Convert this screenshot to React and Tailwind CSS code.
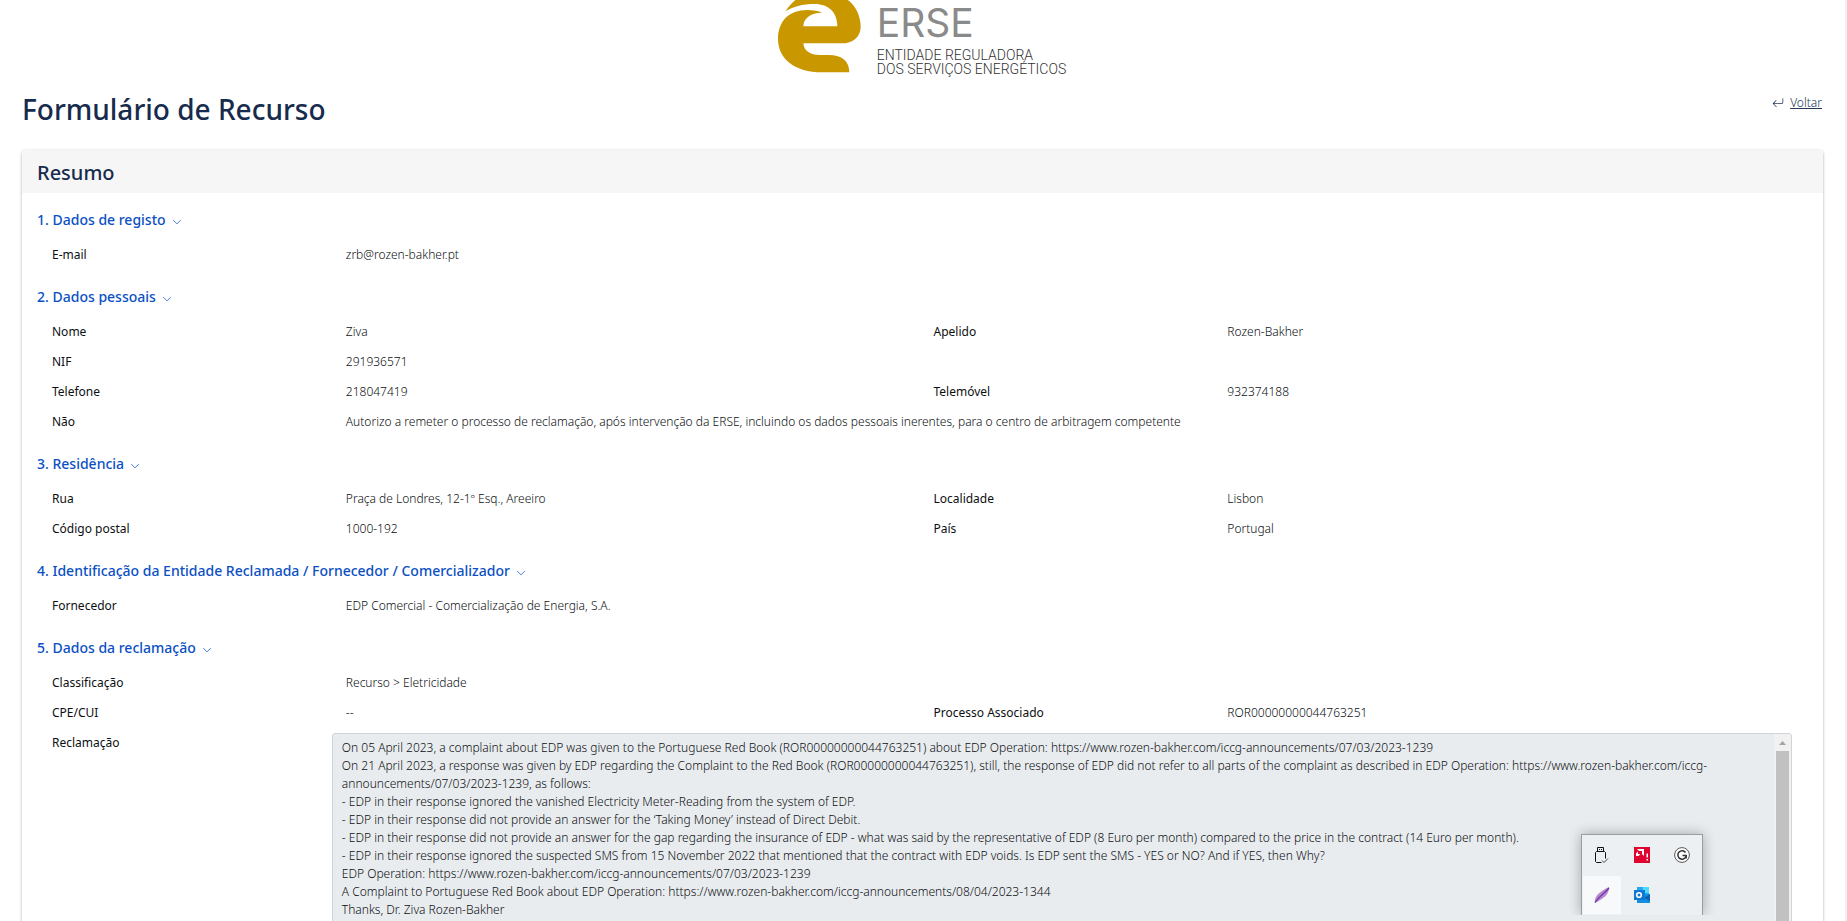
import { BsArrowReturnLeft, BsChevronDown } from "react-icons/bs";

const sections = [
  { title: "1. Dados de registo", rows: [["E-mail", "zrb@rozen-bakher.pt"]] },
  {
    title: "2. Dados pessoais",
    rows: [
      ["Nome", "Ziva", "Apelido", "Rozen-Bakher"],
      ["NIF", "291936571"],
      ["Telefone", "218047419", "Telemóvel", "932374188"],
      ["Não", "Autorizo a remeter o processo de reclamação, após intervenção da ERSE, incluindo os dados pessoais inerentes, para o centro de arbitragem competente"],
    ],
  },
  {
    title: "3. Residência",
    rows: [
      ["Rua", "Praça de Londres, 12-1º Esq., Areeiro", "Localidade", "Lisbon"],
      ["Código postal", "1000-192", "País", "Portugal"],
    ],
  },
  {
    title: "4. Identificação da Entidade Reclamada / Fornecedor / Comercializador",
    rows: [["Fornecedor", "EDP Comercial - Comercialização de Energia, S.A."]],
  },
  {
    title: "5. Dados da reclamação",
    rows: [
      ["Classificação", "Recurso > Eletricidade"],
      ["CPE/CUI", "--", "Processo Associado", "ROR00000000044763251"],
    ],
    complaint: true,
  },
];

const complaint = `On 05 April 2023, a complaint about EDP was given to the Portuguese Red Book (ROR00000000044763251) about EDP Operation: https://www.rozen-bakher.com/iccg-announcements/07/03/2023-1239
On 21 April 2023, a response was given by EDP regarding the Complaint to the Red Book (ROR00000000044763251), still, the response of EDP did not refer to all parts of the complaint as described in EDP Operation: https://www.rozen-bakher.com/iccg-announcements/07/03/2023-1239, as follows:
- EDP in their response ignored the vanished Electricity Meter-Reading from the system of EDP.
- EDP in their response did not provide an answer for the ‘Taking Money’ instead of Direct Debit.
- EDP in their response did not provide an answer for the gap regarding the insurance of EDP - what was said by the representative of EDP (8 Euro per month) compared to the price in the contract (14 Euro per month).
- EDP in their response ignored the suspected SMS from 15 November 2022 that mentioned that the contract with EDP voids. Is EDP sent the SMS - YES or NO? And if YES, then Why?
EDP Operation: https://www.rozen-bakher.com/iccg-announcements/07/03/2023-1239
A Complaint to Portuguese Red Book about EDP Operation: https://www.rozen-bakher.com/iccg-announcements/08/04/2023-1344
Thanks, Dr. Ziva Rozen-Bakher`;

function Logo() {
  return (
    <div className="flex h-[78px] justify-center gap-4 pr-0.5">
      <svg viewBox="50 0 252 222" className="h-[74px] w-[84px]" aria-hidden="true">
        <path
          fill="#c99700"
          d="M75 34C87 16 97 8 108-3L258-3C287 15 301 50 301 80C301 112 276 130 245 130L129 130C130 152 150 165 178 165L205 165C246 165 267 184 267 217L185 217C103 217 53 176 53 117C53 64 86 30 140 30C160 30 175 33 185 38C150 38 129 56 129 79L231 79C231 38 206 12 163 12C126 12 98 20 75 34Z"
        />
      </svg>
      <div className="flex flex-col">
        <div className="font-['Inter'] text-[39px] font-normal leading-[46px] text-[#8a8a8a]">ERSE</div>
        <div className="mt-0.5 font-['Roboto'] text-[14px] leading-[14px] text-[#333]">
          ENTIDADE REGULADORA
          <br />
          DOS SERVIÇOS ENERGÉTICOS
        </div>
      </div>
    </div>
  );
}

function Row({ cells }) {
  const [label, value, label2, value2] = cells;
  return (
    <div className="grid h-[30px] grid-cols-[1fr_2fr_1fr_2fr] items-center">
      <dt className="px-[15px] font-normal">{label}</dt>
      <dd className={label2 ? "px-[15px]" : "col-span-3 px-[15px]"}>{value}</dd>
      {label2 && <dt className="px-[15px] font-normal">{label2}</dt>}
      {label2 && <dd className="px-[15px]">{value2}</dd>}
    </div>
  );
}

function ComplaintBox() {
  return (
    <div className="grid grid-cols-[1fr_5fr]">
      <label htmlFor="complaint" className="px-[15px] pt-1.5 font-normal">
        Reclamação
      </label>
      <div className="mt-[5px] mr-2 ml-px flex overflow-hidden rounded-[3px] border border-[#ced4da] bg-[#e9ecef]">
        <textarea
          id="complaint"
          readOnly
          rows={14}
          defaultValue={complaint}
          className="min-w-0 flex-1 resize-none bg-transparent py-[5px] pr-2 pl-[9px] outline-none [scrollbar-width:none]"
        />
        <div className="flex w-[17px] flex-col items-center bg-[#f1f1f1]" aria-hidden="true">
          <svg viewBox="0 0 17 17" className="h-[17px] w-[17px]">
            <path d="M5 11L8.500 7L12 11Z" fill="#a3a3a3" />
          </svg>
          <div className="w-[13px] flex-1 bg-[#c1c1c1]" />
        </div>
      </div>
    </div>
  );
}

function Section({ section }) {
  return (
    <section>
      <h3 className="pt-[15px] pb-2">
        <button type="button" className="flex h-6 items-center gap-1.5 text-[14px] font-medium text-[#0b50c4]">
          {section.title}
          <BsChevronDown className="mt-1 size-2.5" />
        </button>
      </h3>
      <dl>
        {section.rows.map((cells) => (
          <Row key={cells[0]} cells={cells} />
        ))}
      </dl>
      {section.complaint && <ComplaintBox />}
    </section>
  );
}

function Tray() {
  return (
    <div className="absolute right-[130px] bottom-1.5 overflow-hidden pt-4 pr-3 pl-3">
      <div className="grid w-[122px] grid-cols-3 border border-b-0 border-[#9a9da1] bg-[#edf0f3] shadow-[0_0_12px_rgba(0,0,0,0.3)]">
        <button type="button" aria-label="USB" className="grid h-10 place-items-center">
          <svg viewBox="0 0 16 16" className="size-4" fill="none" stroke="#111">
            <path d="M3.500 4.500v-4h6v4M2.500 15.500l-1-1v-9l1-1h8l1 1v6M2.500 15.500h5M5.500 2v1M7.500 2v1" />
            <path d="M8 13.500l2 2 4-4" stroke="#444" />
          </svg>
        </button>
        <button type="button" aria-label="AMD" className="grid h-10 place-items-center">
          <svg viewBox="0 0 16 16" className="size-4">
            <path fill="#e0052f" d="M0 0h16v16H0z" />
            <path fill="#fff" d="M3 2h7v7L8 7V4H5zM4 4.500L2 6.500V9h2.500l2-2H4zM12.500 6.500h1.500v4h-1.500zM12.500 12h1.500v1.500h-1.500z" />
          </svg>
        </button>
        <button type="button" aria-label="G" className="grid h-10 place-items-center">
          <svg viewBox="0 0 16 16" className="size-4" fill="none">
            <circle cx="8" cy="8" r="7.400" fill="#fff" stroke="#555" strokeWidth="1" />
            <path d="M11.500 5.500A4.200 4.200 0 1 0 12 9.500M8.500 8.500H12.200V11.500" stroke="#333" strokeWidth="1.500" />
          </svg>
        </button>
        <button type="button" aria-label="Feather" className="m-px grid h-[38px] place-items-center bg-[#f7f9fb]">
          <svg viewBox="0 0 16 16" className="size-4">
            <path fill="#b58ad0" d="M1 16C0 9 5 5 15 0C15 8 10 11 1 16Z" />
            <path d="M1 15.500C5 9 10 7 15 1" stroke="#7a35a8" strokeWidth="1.400" fill="none" />
          </svg>
        </button>
        <button type="button" aria-label="Outlook" className="grid h-10 place-items-center">
          <svg viewBox="0 0 16 16" className="size-4">
            <path fill="#28a8ea" d="M3 0h12v8H3z" />
            <path fill="#50d9ff" d="M9 0h6v6h-6z" />
            <path fill="#1490df" d="M3 8l13-1v9H3z" />
            <path fill="#0a62b0" d="M10 11l6-4v7z" />
            <path fill="#0f78d4" d="M0 3h11v10H0z" />
            <circle cx="5" cy="8" r="2.300" fill="none" stroke="#fff" strokeWidth="1.600" />
          </svg>
        </button>
      </div>
    </div>
  );
}

export default function App() {
  return (
    <div className="relative h-screen overflow-hidden border-r-2 border-[#f1f1f1] bg-white font-['Noto_Sans',sans-serif] text-[12px] font-light leading-[18px] text-[#0c0f12]">
      <header>
        <Logo />
      </header>
      <main className="px-[22px]">
        <div className="flex h-[72px] items-start justify-between pt-[11px]">
          <h1 className="text-[28px] font-medium leading-10 text-[#172b4d]">Formulário de Recurso</h1>
          <a href="#voltar" className="mt-[5px] mr-px flex items-center gap-1.5 text-[#253858]">
            <BsArrowReturnLeft className="size-3" />
            <span className="underline">Voltar</span>
          </a>
        </div>
        <article className="rounded-[4px] shadow-[0_1px_3px_rgba(0,0,0,0.35)]">
          <h2 className="h-[43px] rounded-t-[4px] bg-[#f6f6f6] px-[15px] text-[20px] font-medium leading-[45px] text-[#172b4d]">Resumo</h2>
          <div className="pr-[23px] pb-6 pl-[15px]">
            {sections.map((section) => (
              <Section key={section.title} section={section} />
            ))}
          </div>
        </article>
      </main>
      <Tray />
    </div>
  );
}
